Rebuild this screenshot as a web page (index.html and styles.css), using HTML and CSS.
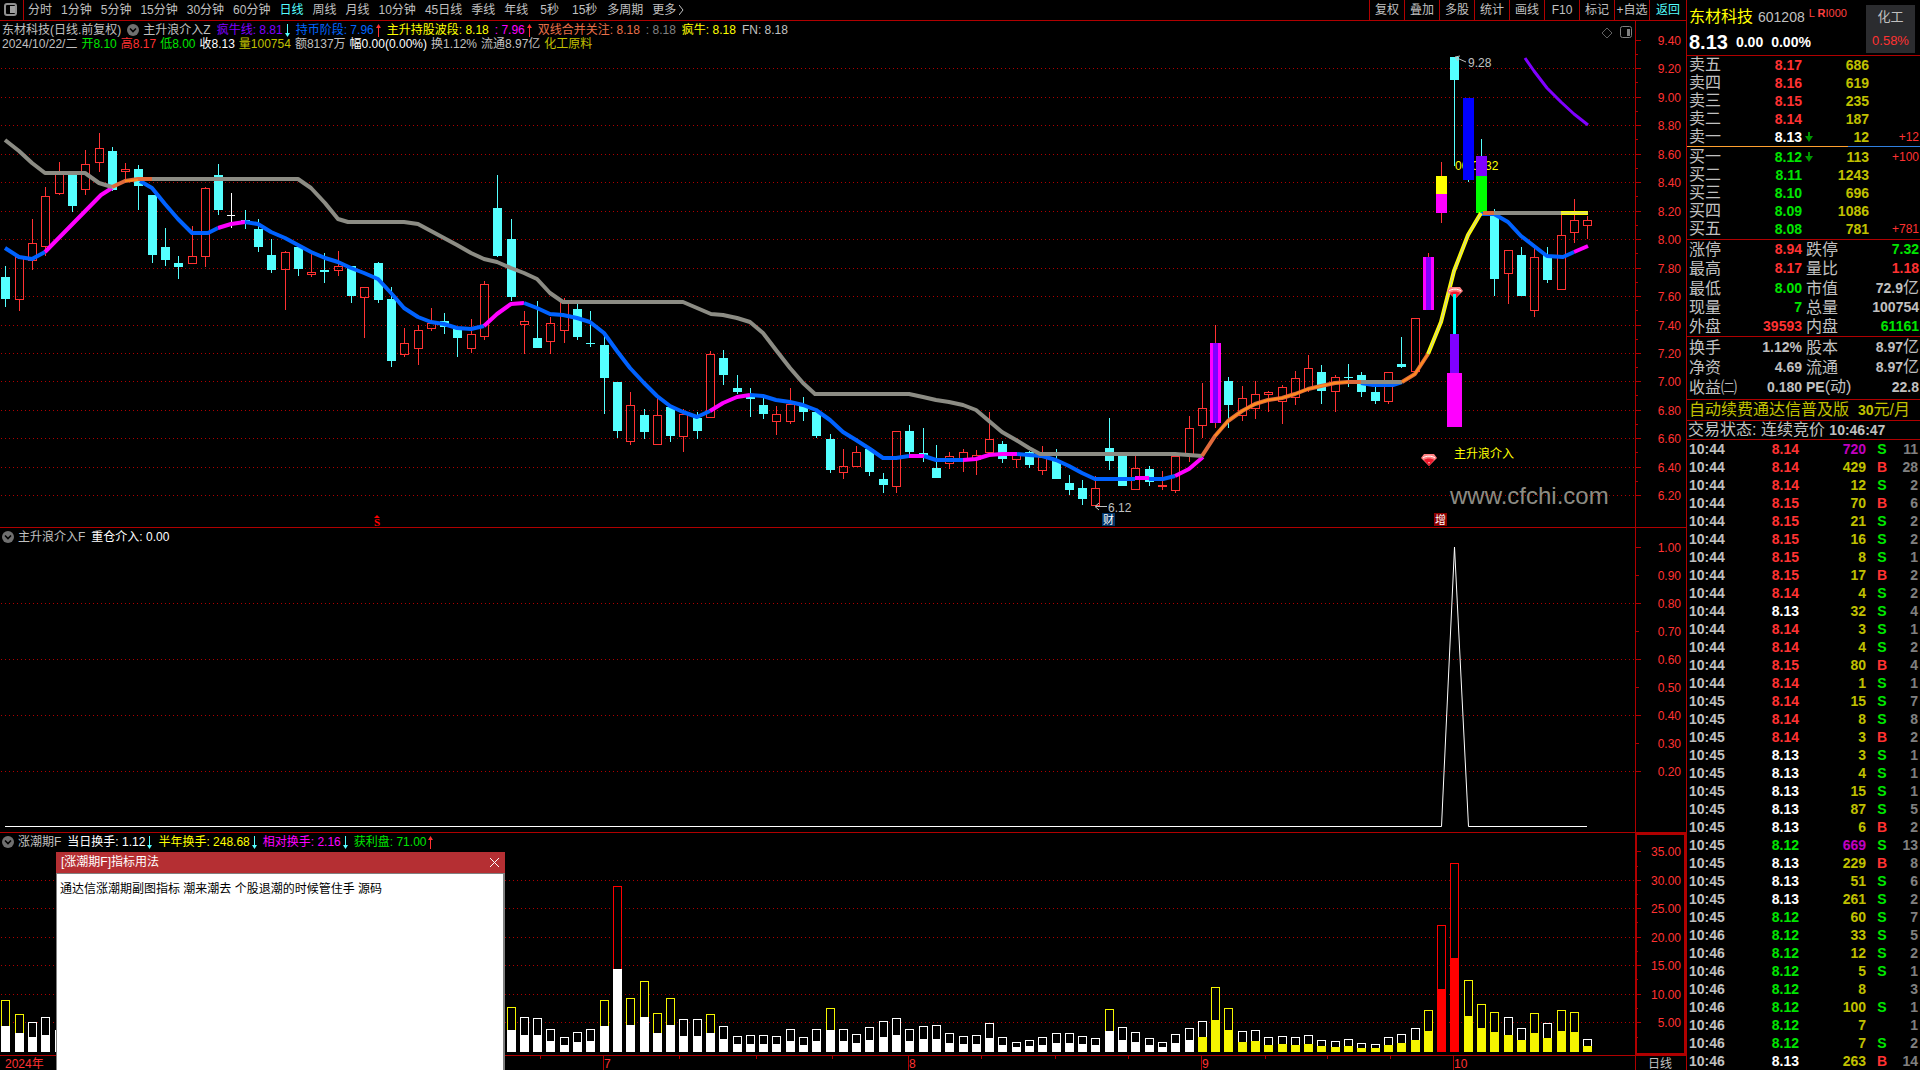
FILE: index.html
```html
<!DOCTYPE html>
<html lang="zh-CN">
<head>
<meta charset="utf-8">
<title>东材科技 601208 日线</title>
<link rel="stylesheet" href="styles.css">
</head>
<body>
<svg class="defs" aria-hidden="true">
  <symbol id="down" viewBox="0 0 5 13"><path d="M2 0h1v9h2L2.500 13 0 9h2z"/></symbol>
  <symbol id="up" viewBox="0 0 5 13"><path d="M2 13h1V4h2L2.500 0 0 4h2z"/></symbol>
  <symbol id="fold" viewBox="0 0 12 12"><circle cx="6" cy="6" r="6" fill="#707070"/><path d="M3 4.500l3 3 3-3" fill="none" stroke="#000" stroke-width="1.600"/></symbol>
  <symbol id="fall" viewBox="0 0 8 10"><path d="M3 0h2v4h3L4 10 0 4h3z" fill="#009600"/></symbol>
  <symbol id="gem" viewBox="0 0 16 12"><path d="M3 0h10l3 4-8 8-8-8z" fill="#ff8080"/><path d="M2 4c3-2.500 9-2.500 12 0" fill="none" stroke="#fff" stroke-width="1"/><path d="M3 6c2-2 8-2 10 0L8 12z" fill="#f0182d"/><path d="M7 8h2L8 10z" fill="#ffb0b0"/></symbol>
</svg>
<div class="app">
  <main class="main">
    <nav class="toolbar">
      <button class="dock" aria-label="侧栏"><svg width="13" height="13"><rect x="1" y="1" width="11" height="11" rx="2" fill="none" stroke="#909090" stroke-width="2"/><rect x="6" y="3" width="5" height="7" fill="#a0a0a0"/></svg></button>
      <div class="periods">
        <button>分时</button><button>1分钟</button><button>5分钟</button><button>15分钟</button><button>30分钟</button><button>60分钟</button><button class="on">日线</button><button>周线</button><button>月线</button><button>10分钟</button><button>45日线</button><button>季线</button><button>年线</button><button class="sec">5秒</button><button class="sec">15秒</button><button>多周期</button><button>更多<svg width="5" height="10"><path d="M0 0l4 5-4 5" fill="none" stroke="#c0c0c0"/></svg></button>
      </div>
      <div class="tools">
        <button>复权</button><button>叠加</button><button>多股</button><button>统计</button><button>画线</button><button>F10</button><button>标记</button><button>+自选</button><button class="on">返回</button>
      </div>
    </nav>

    <section class="panel">
      <svg class="chart" id="price" viewBox="0 21 1686 506"></svg>
      <div class="legend">
        <div class="line row-a">
          <span>东材科技(日线.前复权)</span>
          <span><svg class="fold"><use href="#fold"/></svg>主升浪介入Z</span>
          <span class="violet">疯牛线: 8.81<svg class="arrow cyan"><use href="#down"/></svg></span>
          <span class="blue">持币阶段: 7.96<svg class="arrow red"><use href="#up"/></svg></span>
          <span class="yellow">主升持股波段: 8.18</span>
          <span class="magenta">: 7.96<svg class="arrow red"><use href="#up"/></svg></span>
          <span class="orange">双线合并关注: 8.18</span>
          <span class="dim">: 8.18</span>
          <span class="yellow">疯牛: 8.18</span>
          <span>FN: 8.18</span>
        </div>
        <div class="line row-b">
          <span>2024/10/22/二</span><span class="green">开8.10</span><span class="red">高8.17</span><span class="green">低8.00</span><span class="white">收8.13</span><span class="gold">量100754</span><span>额8137万</span><span class="white">幅0.00(0.00%)</span><span>换1.12%</span><span>流通8.97亿</span><span class="gold">化工原料</span>
        </div>
      </div>
    </section>

    <section class="panel">
      <svg class="chart" id="signal" viewBox="0 528 1686 304"></svg>
      <div class="legend">
        <div class="line row-a"><span><svg class="fold"><use href="#fold"/></svg>主升浪介入F</span><span class="white">重仓介入: 0.00</span></div>
      </div>
    </section>

    <section class="panel">
      <svg class="chart" id="turnover" viewBox="0 833 1686 222"></svg>
      <div class="legend">
        <div class="line row-a">
          <span><svg class="fold"><use href="#fold"/></svg>涨潮期F</span>
          <span class="white">当日换手: 1.12<svg class="arrow cyan"><use href="#down"/></svg></span>
          <span class="yellow">半年换手: 248.68<svg class="arrow cyan"><use href="#down"/></svg></span>
          <span class="magenta">相对换手: 2.16<svg class="arrow cyan"><use href="#down"/></svg></span>
          <span class="green">获利盘: 71.00<svg class="arrow red"><use href="#up"/></svg></span>
        </div>
      </div>
    </section>

    <svg class="chart dates" id="dates" viewBox="0 1056 1686 14"></svg>

    <div class="popup" role="dialog" aria-labelledby="popup-title">
      <header><h2 id="popup-title">[涨潮期F]指标用法</h2><button aria-label="关闭"><svg width="11" height="11"><path d="M1 1l9 9M10 1l-9 9" stroke="#fff"/></svg></button></header>
      <p>通达信涨潮期副图指标 潮来潮去 个股退潮的时候管住手 源码</p>
    </div>
  </main>

  <aside class="side">
    <header class="quote">
      <div class="ident">
        <h1>东材科技</h1><span class="code">601208</span><span class="tags">L <b>R</b>I000</span>
      </div>
      <div class="now"><strong>8.13</strong><b>0.00</b><b>0.00%</b></div>
      <div class="sector"><span>化工</span><span class="red">0.58%</span></div>
    </header>

    <table class="book asks">
      <tr><th>卖五</th><td class="red">8.17</td><td></td><td class="gold">686</td><td class="chg"></td></tr>
      <tr><th>卖四</th><td class="red">8.16</td><td></td><td class="gold">619</td><td class="chg"></td></tr>
      <tr><th>卖三</th><td class="red">8.15</td><td></td><td class="gold">235</td><td class="chg"></td></tr>
      <tr><th>卖二</th><td class="red">8.14</td><td></td><td class="gold">187</td><td class="chg"></td></tr>
      <tr><th>卖一</th><td class="white">8.13</td><td><svg class="fall"><use href="#fall"/></svg></td><td class="gold">12</td><td class="chg">+12</td></tr>
    </table>
    <div class="split"></div>
    <table class="book bids">
      <tr><th>买一</th><td class="green">8.12</td><td><svg class="fall"><use href="#fall"/></svg></td><td class="gold">113</td><td class="chg">+100</td></tr>
      <tr><th>买二</th><td class="green">8.11</td><td></td><td class="gold">1243</td><td class="chg"></td></tr>
      <tr><th>买三</th><td class="green">8.10</td><td></td><td class="gold">696</td><td class="chg"></td></tr>
      <tr><th>买四</th><td class="green">8.09</td><td></td><td class="gold">1086</td><td class="chg"></td></tr>
      <tr><th>买五</th><td class="green">8.08</td><td></td><td class="gold">781</td><td class="chg">+781</td></tr>
    </table>

    <table class="stats">
      <tr><th>涨停</th><td class="red">8.94</td><th>跌停</th><td class="green">7.32</td></tr>
      <tr><th>最高</th><td class="red">8.17</td><th>量比</th><td class="red">1.18</td></tr>
      <tr><th>最低</th><td class="green">8.00</td><th>市值</th><td>72.9<i>亿</i></td></tr>
      <tr><th>现量</th><td class="green">7</td><th>总量</th><td>100754</td></tr>
      <tr><th>外盘</th><td class="red">39593</td><th>内盘</th><td class="green">61161</td></tr>
    </table>
    <table class="stats tail">
      <tr><th>换手</th><td>1.12%</td><th>股本</th><td>8.97<i>亿</i></td></tr>
      <tr><th>净资</th><td>4.69</td><th>流通</th><td>8.97<i>亿</i></td></tr>
      <tr><th>收益㈡</th><td>0.180</td><th><b>PE</b>(动)</th><td>22.8</td></tr>
    </table>

    <a class="promo" href="#renew">自动续费通达信普及版&nbsp; <b>30</b>元/月</a>
    <p class="state">交易状态: 连续竞价 <b>10:46:47</b></p>
    <table class="ticks"><tbody id="ticks"></tbody></table>
  </aside>
</div>
<script src="charts.js"></script>
</body>
</html>
```
FILE: styles.css
```css
* { box-sizing: border-box; margin: 0; padding: 0; }

:root {
  --line: #b00000;
  --red: #ff3232;
  --green: #00e600;
  --gold: #c0c000;
  --text: #c0c0c0;
  --cyan: #54ffff;
}

body {
  background: #000;
  color: var(--text);
  font: 12px/14px "Liberation Sans", "Noto Sans CJK SC", sans-serif;
  overflow: hidden;
}

button { background: none; border: 0; color: inherit; font: inherit; white-space: nowrap; }
a { text-decoration: none; }
i { font-style: normal; }
table { border-collapse: collapse; width: 100%; table-layout: fixed; }
svg { display: block; }

.defs { position: absolute; width: 0; height: 0; }

.red { color: var(--red); }
.green { color: var(--green); }
.gold { color: var(--gold); }
.white { color: #fff; }
.yellow { color: #ffff00; }
.magenta { color: #ff00ff; }
.violet { color: #8000ff; }
.blue { color: #0066ff; }
.orange { color: #e8704a; }
.cyan { color: var(--cyan); }
.dim { color: #808080; }

.app { display: grid; grid-template-columns: minmax(0, 1fr) 234px; height: 100vh; }

/* left side: toolbar, three stacked charts, date axis */
.main {
  position: relative;
  display: grid;
  grid-template-rows: 21px minmax(0, 507fr) minmax(0, 305fr) minmax(0, 223fr) 14px;
  overflow: hidden;
}

.toolbar { display: flex; border-bottom: 1px solid var(--line); }
.toolbar button { display: flex; align-items: center; justify-content: center; gap: 3px; }
.toolbar .dock { width: 24px; padding: 0 2px 1px 0; border-right: 1px solid var(--line); }
.periods { display: flex; flex: 1; gap: 9px; padding-left: 4px; }
.periods .sec { padding: 0 1px 0 3px; }
.tools { display: flex; }
.tools button { width: 35px; border-left: 1px solid var(--line); }
.tools button:last-child { width: 37px; }
.toolbar .on { color: var(--cyan); }

.panel { display: grid; border-bottom: 1px solid var(--line); }
.panel > * { grid-area: 1 / 1; min-width: 0; min-height: 0; }
.chart { width: 100%; height: 100%; }
.legend { padding: 2px 2px 0; z-index: 1; }
.line { display: flex; white-space: pre; }
.line span { display: flex; align-items: center; }
.row-a { gap: 6px; }
.row-b { gap: 4px; }
.fold { width: 12px; height: 12px; margin-right: 4px; }
.arrow { width: 5px; height: 13px; margin-left: 2px; fill: currentColor; }
.chart text { font-size: 12px; }

.popup {
  position: absolute;
  left: 56px;
  bottom: 0;
  width: 449px;
  height: 218px;
  background: #fff;
  color: #000;
  border: 1px solid #808080;
  border-width: 0 2px 0 1px;
}
.popup header {
  display: flex;
  align-items: center;
  justify-content: space-between;
  height: 22px;
  margin: 0 -2px 0 -1px;
  padding: 0 5px 1px 5px;
  background: #b52f33;
  color: #fff;
  border-bottom: 1px solid #808080;
}
.popup h2 { font-size: 12px; font-weight: 400; }
.popup p { padding: 8px 3px; }

/* right side: quote, order book, statistics, ticks */
.side { border-left: 1px solid var(--line); font-size: 14px; overflow: hidden; }

.quote {
  display: grid;
  grid-template: 26px 29px / 1fr 49px;
  padding: 4px 5px 0 2px;
  height: 56px;
  border-bottom: 1px solid var(--line);
}
.ident, .now { display: flex; align-items: center; white-space: nowrap; }
.quote h1 { color: #ffff00; font-size: 16px; font-weight: 400; }
.code { margin-left: 5px; font-size: 14px; }
.tags { margin: 2px 0 0 4px; color: #ff4040; font-size: 11px; align-self: flex-start; }
.now { gap: 8px; color: #fff; padding-bottom: 6px; }
.now strong { font-size: 20px; }
.sector {
  grid-area: 1 / 2 / 3 / 3;
  display: flex;
  flex-direction: column;
  align-items: center;
  justify-content: space-around;
  margin-top: 1px;
  height: 48px;
  background: #2b2c2f;
  font-size: 13px;
}

.book { line-height: 18px; }
.book tr { height: 18px; }
.book th { width: 60px; }
.side th { padding-left: 2px; font-size: 16px; font-weight: 400; text-align: left; white-space: nowrap; }
.side td { font-weight: 700; text-align: right; white-space: nowrap; }
.book td:nth-child(2) { width: 55px; }
.book td:nth-child(3) { width: 16px; }
.book td:nth-child(4) { width: 51px; }
.book .chg { padding-right: 1px; color: var(--red); font-size: 12px; font-weight: 400; }
.fall { width: 8px; height: 10px; margin-left: 3px; }
.split { height: 1px; background: linear-gradient(90deg, #ffa030 69%, #3080e0 69%); }
.bids { margin: 1px 0; }

.stats { line-height: 19px; border-top: 1px solid var(--line); }
.stats tr { height: 19px; }
.stats th { width: 60px; }
.stats td:nth-child(2) { width: 55px; }
.stats th:nth-child(3) { padding-left: 4px; width: 50px; }
.stats td:nth-child(4) { padding-right: 1px; }
.stats i { font-size: 16px; font-weight: 400; }
.stats b { font-size: 14px; }
.tail { margin-bottom: 2px; }

.promo, .state { display: block; padding-left: 2px; border-top: 1px solid var(--line); font-size: 16px; white-space: nowrap; }
.promo { line-height: 20px; color: var(--gold); }
.state { padding-left: 1px; line-height: 18px; border-bottom: 1px solid var(--line); }
.state b, .promo b { font-size: 14px; }

.ticks { line-height: 18px; }
.ticks tr { height: 18px; }
.ticks td:nth-child(1) { width: 60px; padding-left: 2px; text-align: left; }
.ticks td:nth-child(2) { width: 52px; }
.ticks td:nth-child(3) { width: 67px; }
.ticks td:nth-child(4) { width: 28px; text-align: center; padding-left: 4px; }
.ticks td:nth-child(5) { padding-right: 2px; color: #808080; }
.ticks .big { color: #c000c0; }
```
FILE: charts.js
```js
const LINE = '#b00000';
const LABEL = '#ff3232';
const CYAN = '#54ffff';
const barX = i => Math.round(5.45 + 13.293 * i);
const rect = (x, y, w, h, fill) => `<rect x="${x}" y="${y}" width="${w}" height="${h}" fill="${fill}"/>`;
const text = (x, y, fill, s, extra = '') => `<text x="${x}" y="${y}" fill="${fill}" ${extra}>${s}</text>`;
const grid = y => `<path d="M1 ${y}.5H1635" stroke="${LINE}" stroke-dasharray="1 3"/>`;
const poly = (pts, color, w) =>
  `<polyline points="${pts}" fill="none" stroke="${color}" stroke-width="${w}" stroke-linejoin="round"/>`;

/* vertical scale: rows are [y, label, hasGrid] */
function axis(rows, top, bottom, minor) {
  let s = rect(1635, top, 1, bottom - top, LINE);
  for (const [y, label, long] of rows) {
    if (long) s += grid(y);
    s += rect(1636, y, long === false ? 3 : 5, 1, LINE);
    s += text(1681, y + 5, LABEL, label, 'text-anchor="end"');
  }
  for (const y of minor) s += rect(1636, y, 2, 1, LINE);
  return s;
}

/* candles: kind, high, body top, body bottom, low */
const candles = `C 266 277 299 307|R 257 257 300 311|R 219 243 261 270|R 187 196 247 256|R 162 173 194 195|C 173 173 206 212|R 150 164 190 195|R 133 148 163 172|C 147 151 190 191|R 163 169 172 180|C 165 169 186 210|C 195 195 255 263|C 228 247 260 266|C 256 263 267 279|R 226 256 264 264|R 187 188 257 267|C 164 175 210 215|W 193 215 216 228|C 210 220 222 229|C 219 229 247 252|C 239 255 270 273|R 251 252 270 310|C 247 247 269 276|R 254 272 275 277|C 253 270 272 283|R 251 266 271 276|C 266 266 296 303|R 287 287 298 338|C 262 263 300 303|C 287 299 361 367|R 328 343 355 357|R 325 330 349 365|R 308 323 329 331|C 313 321 327 334|C 329 329 338 357|R 319 334 349 353|R 281 284 337 340|C 175 208 256 257|C 219 239 297 301|R 311 321 325 354|C 301 338 348 348|R 317 323 342 354|R 298 302 331 343|C 303 309 337 340|C 311 343 344 347|C 335 345 378 414|C 382 382 431 438|R 392 405 442 445|C 409 415 432 439|R 397 415 445 445|C 407 407 436 442|R 409 414 437 452|C 412 418 431 439|R 351 354 418 418|C 350 358 375 385|C 375 388 392 394|C 388 396 399 417|C 398 405 414 419|R 406 414 422 435|R 388 404 422 424|C 397 406 412 421|C 412 412 436 438|C 434 439 470 473|R 449 466 473 479|R 446 452 467 467|C 449 449 472 476|C 473 479 485 493|R 431 431 487 493|C 425 431 452 454|C 428 453 457 462|C 445 468 478 478|R 452 456 464 469|R 449 452 460 472|R 450 455 460 475|R 412 439 453 455|C 441 444 459 463|R 453 455 460 468|C 451 452 465 468|R 446 457 471 475|C 449 460 479 479|C 475 483 490 495|C 480 488 499 505|R 476 488 506 506|C 418 448 461 470|C 455 455 486 486|R 455 468 490 490|C 466 469 482 486|R 471 485 487 490|R 456 456 491 493|R 416 428 455 462|R 383 408 426 438|P 325 343 423 428|C 377 381 405 428|R 386 398 416 421|R 381 394 409 419|R 391 392 395 412|R 385 387 402 424|R 371 378 398 405|R 355 368 390 392|C 365 372 391 404|R 375 377 392 412|C 364 377 378 387|C 372 375 392 397|C 387 392 401 404|R 372 372 402 404|C 337 364 367 368|R 318 318 372 372|P 253 257 310 310|Y 162 176 213 223|C 57 57 80 166|B 98 98 180 182|G 139 156 213 213|C 209 215 279 296|R 250 250 274 304|C 247 255 296 296|R 247 257 311 317|C 247 255 280 283|R 215 235 290 290|R 199 220 233 243|R 216 220 226 239`.split('|').map(r => r.split(' '));

function candle(row, i) {
  const kind = row[0];
  const [hi, top, bot, lo] = row.slice(1).map(Number);
  const x = barX(i);
  const ink = kind === 'W' ? '#fff' : 'CBG'.includes(kind) ? CYAN : LABEL;
  const wick = rect(x, hi, 1, Math.max(top - hi, 0), ink) + rect(x, bot, 1, Math.max(lo - bot, 0), ink);
  switch (kind) {
    case 'C': return wick + rect(x - 4, top, 9, bot - top, CYAN);
    case 'W': return wick + rect(x, hi, 1, lo - hi, ink) + rect(x - 4, top, 8, 1, ink);
    case 'P': return wick + rect(x - 5, top, 11, bot - top, '#ff00ff') + rect(x - 2, top, 5, bot - top, '#8000ff');
    case 'Y': return wick + rect(x - 5, top, 11, 18, '#ffff00') + rect(x - 5, top + 18, 11, bot - top - 18, '#ff00ff');
    case 'B': return wick + rect(x - 5, top, 11, bot - top, '#0000ff');
    case 'G': return wick + rect(x - 5, top, 11, 20, '#8000ff') + rect(x - 5, top + 20, 11, bot - top - 20, '#00ff00');
    default: return wick + `<rect x="${x - 3.5}" y="${top + 0.5}" width="8" height="${Math.max(bot - top - 1, 1)}" fill="none" stroke="${LABEL}"/>`;
  }
}

/* holding line (blue) with its rising stretches (magenta) */
const BLUE = '#0062ff', PINK = '#ff00ff', GRAY = '#8c8c84', ORANGE = '#e06a3c', AMBER = '#ff8c1e', YELLOW = '#ffff00';
const lines = [
  [BLUE, 4, '5,248 19,257 32,259 45,252'],
  [PINK, 4, '45,252 101,195 112,188'],
  [BLUE, 4, '140,181 152,188 165,204 178,219 192,233 208,233 218,228'],
  [PINK, 4, '218,228 231,224 245,222'],
  [BLUE, 4, '245,222 258,224 271,232 285,238 298,245 311,252 325,258 338,262 351,268 364,273 378,279 391,293 404,308 418,317 431,322 444,324 457,328 471,329 484,326'],
  [PINK, 4, '484,326 497,314 511,304 524,303'],
  [BLUE, 4, '524,303 537,308 550,314 563,315 577,318 590,322 604,333 617,351 630,368 644,383 657,396 670,406 683,412 697,417 710,411'],
  [PINK, 4, '710,411 723,403 737,397 750,395'],
  [BLUE, 4, '750,395 763,396 776,400 790,402 803,405 816,410 830,420 843,432 856,440 870,449 883,458 896,458 909,456'],
  [PINK, 4, '909,456 924,456'],
  [BLUE, 4, '924,456 936,460 963,460'],
  [PINK, 4, '963,460 976,459 989,455 1002,454 1017,454'],
  [BLUE, 4, '1017,454 1029,455 1042,456 1056,460 1069,466 1082,473 1095,479 1135,479'],
  [PINK, 4, '1135,478 1149,478'],
  [BLUE, 4, '1149,479 1163,479 1175,476'],
  [PINK, 4, '1175,476 1189,469 1203,457'],
  [BLUE, 4, '1361,383 1373,385 1393,385 1402,382'],
  [BLUE, 4, '1481,214 1494,214 1508,222 1521,236 1534,246 1547,256 1563,257 1574,252'],
  [PINK, 4, '1574,252 1588,246'],
  [GRAY, 4, '5,140 19,151 32,163 45,173 85,173 99,183 112,187'],
  [ORANGE, 4, '112,187 125,181 138,179 152,179'],
  [AMBER, 2, '125,181 138,180'],
  [GRAY, 4, '152,179 298,179 311,188 325,203 338,219 348,222 404,222 418,224 431,231 444,238 457,245 471,253 484,259 497,262 511,268 524,273 537,279 550,293 563,302 683,302 697,308 711,314 723,315 737,318 750,322 763,333 776,350 790,368 803,383 815,394 909,394 923,397 936,400 949,402 963,405 976,410 989,421 1002,432 1016,440 1029,448 1040,454 1175,454 1202,456'],
  [ORANGE, 4, '1202,456 1215,436 1228,421 1242,411 1255,404 1268,400 1282,398 1295,394 1308,389 1321,386 1335,383 1348,382 1361,382'],
  [AMBER, 2, '1215,436 1228,421 1242,411 1255,404 1268,400 1282,398 1295,394 1308,389 1321,386 1335,383 1348,382'],
  [GRAY, 4, '1361,382 1402,382'],
  [ORANGE, 4, '1402,382 1415,374 1428,354'],
  [AMBER, 2, '1402,382 1415,374 1428,354'],
  [YELLOW, 4, '1428,354 1441,322 1454,271 1468,235 1481,213'],
  ['#c0c0c0', 1, '1428,354 1441,322 1454,271 1468,235 1481,213'],
  [ORANGE, 4, '1483,213 1494,213'],
  [GRAY, 4, '1494,213 1561,213'],
  [YELLOW, 4, '1561,213 1588,213'],
  ['#c0c0c0', 1, '1561,213 1588,213'],
  ['#8000ff', 3, '1525,58 1534,71 1547,88 1561,102 1574,114 1588,125']
];

function badge(x, bg, label) {
  return rect(x, 513, 13, 13, bg) + text(x + 1, 524, '#fff', label, 'style="font-size:11px"');
}

const priceRows = [], priceMinor = [];
for (let k = 0; k < 17; k++) {
  const y = Math.round(40 + 28.45 * k);
  priceRows.push([y, (9.4 - 0.2 * k).toFixed(2), k > 0]);
  if (k < 16) priceMinor.push(y + 14);
}
document.getElementById('price').innerHTML =
  axis(priceRows, 21, 527, priceMinor) + rect(1636, 40, 5, 1, LINE) +
  text(1455, 170, YELLOW, '00.0032') +
  candles.map(candle).join('') +
  lines.map(([c, w, p]) => poly(p, c, w)).join('') +
  `<path d="M1607 28l5 5-5 5-5-5z" fill="none" stroke="#606060"/>
   <rect x="1620.5" y="26.5" width="11" height="11" rx="2" fill="none" stroke="#808080"/>` + rect(1627, 29, 3, 7, '#808080') +
  '<use href="#gem" x="1447" y="287" width="16" height="12"/><use href="#gem" x="1421" y="454" width="16" height="12"/>' +
  rect(1453, 294, 3, 40, '#00ffff') + rect(1450, 334, 9, 39, '#8000ff') + rect(1447, 373, 15, 54, PINK) +
  text(1454, 458, YELLOW, '主升浪介入') +
  text(1450, 504, GRAY, 'www.cfchi.com', 'style="font-size:24px"') +
  `<path d="M1096 506.5h11M1099 503l-4 3.500 4 3.500M1466 62l-9-4M1458 61l-3-4 5-1" fill="none" stroke="#c0c0c0"/>` +
  text(1108, 512, '#c0c0c0', '6.12') + text(1468, 67, '#c0c0c0', '9.28') +
  badge(1102, '#003366', '财') + badge(1434, '#8b0000', '增') +
  '<path d="M374 518l3-3 3 3z" fill="#f00"/>' +
  text(374, 526, '#f00', 'S', 'style="font:bold 11px Liberation Serif,serif"');

document.getElementById('signal').innerHTML =
  axis([1, 0.9, 0.8, 0.7, 0.6, 0.5, 0.4, 0.3, 0.2].map((v, k) => [547 + 28 * k, v.toFixed(2), k > 0 && k % 2 === 0]), 528, 832, []) +
  rect(1636, 547, 5, 1, LINE) +
  '<path d="M5 826.500H1441.500L1454.500 547L1468.500 826.500H1587" fill="none" stroke="#fff"/>';

/* turnover bars: bar index, outline colour + top edge; the lower half is filled */
const turns = { 0: 'Y1000 Y1014 W1022 W1017 W1030', 38: 'Y1007 W1017 W1018 W1029 W1037 W1032 W1029 Y1000 R886 Y998 Y981 Y1013 Y998 W1019 W1019 Y1014 W1026 W1036 W1035 W1035 W1036 W1029 W1037 W1029 Y1008 W1029 W1034 W1027 W1021 W1018 W1029 W1026 W1025 W1033 W1036 W1035 W1023 W1037 W1042 W1040 W1037 W1033 W1033 W1036 W1038 Y1009 W1027 W1032 W1038 W1042 W1034 W1028 W1021 Y987 Y1008 W1031 W1030 W1037 W1036 W1037 W1035 W1040 W1041 W1039 W1043 W1044 W1037 W1034 W1028 Y1010 R925 R863 Y980 Y1004 Y1012 W1017 W1028 Y1013 W1023 Y1010 Y1012 W1039' };
let bars = '';
for (const start in turns) {
  turns[start].split(' ').forEach((t, k) => {
    const i = +start + k, x = barX(i) - 4, top = +t.slice(1), half = Math.round((top + 1052) / 2);
    const edge = { Y: '#f5f500', W: '#fff', R: '#ff0000' }[t[0]];
    const fill = i < 90 ? '#fff' : t[0] === 'R' ? '#ff0000' : '#f5f500';
    bars += `<rect x="${x + 0.5}" y="${top + 0.5}" width="8" height="${half - top}" fill="#000" stroke="${edge}"/>` + rect(x, half, 9, 1052 - half, fill);
  });
}
document.getElementById('turnover').innerHTML =
  axis([851, 880, 908, 937, 965, 994, 1022].map((y, k) => [y, (35 - 5 * k).toFixed(2), k > 0]), 833, 1055, [866, 894, 922, 951, 979, 1008, 1037]) +
  rect(1636, 851, 5, 1, LINE) +
  `<path d="M1636 834H1685V1054H1636Z" fill="none" stroke="${LINE}" stroke-width="2"/>` + bars;

document.getElementById('dates').innerHTML =
  text(5, 1068, LABEL, '2024年') +
  [[603, '7'], [908, '8'], [1201, '9'], [1453, '10']].map(([x, s]) => rect(x, 1056, 1, 14, LINE) + text(x + 1, 1068, LABEL, s)).join('') +
  [540, 679, 756, 832, 981, 1055, 1128, 1265, 1327, 1390].map(x => rect(x, 1056, 1, 3, LINE)).join('') +
  rect(1635, 1056, 1, 14, LINE) + text(1648, 1068, '#c0c0c0', '日线');

/* trade ticks: minute, cents over 8.00, volume, side, count */
const ticks = '44 14 720 S 11|44 14 429 B 28|44 14 12 S 2|44 15 70 B 6|44 15 21 S 2|44 15 16 S 2|44 15 8 S 1|44 15 17 B 2|44 14 4 S 2|44 13 32 S 4|44 14 3 S 1|44 14 4 S 2|44 15 80 B 4|44 14 1 S 1|45 14 15 S 7|45 14 8 S 8|45 14 3 B 2|45 13 3 S 1|45 13 4 S 1|45 13 15 S 1|45 13 87 S 5|45 13 6 B 2|45 12 669 S 13|45 13 229 B 8|45 13 51 S 6|45 13 261 S 2|45 12 60 S 7|46 12 33 S 5|46 12 12 S 2|46 12 5 S 1|46 12 8 - 3|46 12 100 S 1|46 12 7 - 1|46 12 7 S 2|46 13 263 B 14';
document.getElementById('ticks').innerHTML = ticks.split('|').map(r => {
  const [m, p, v, side, n] = r.split(' ');
  const tone = p > 13 ? 'red' : p < 13 ? 'green' : 'white';
  return `<tr><td>10:${m}</td><td class="${tone}">8.${p}</td><td class="${v > 500 ? 'big' : 'gold'}">${v}</td>` +
    `<td class="${side === 'B' ? 'red' : 'green'}">${side === '-' ? '' : side}</td><td>${n}</td></tr>`;
}).join('');
```
